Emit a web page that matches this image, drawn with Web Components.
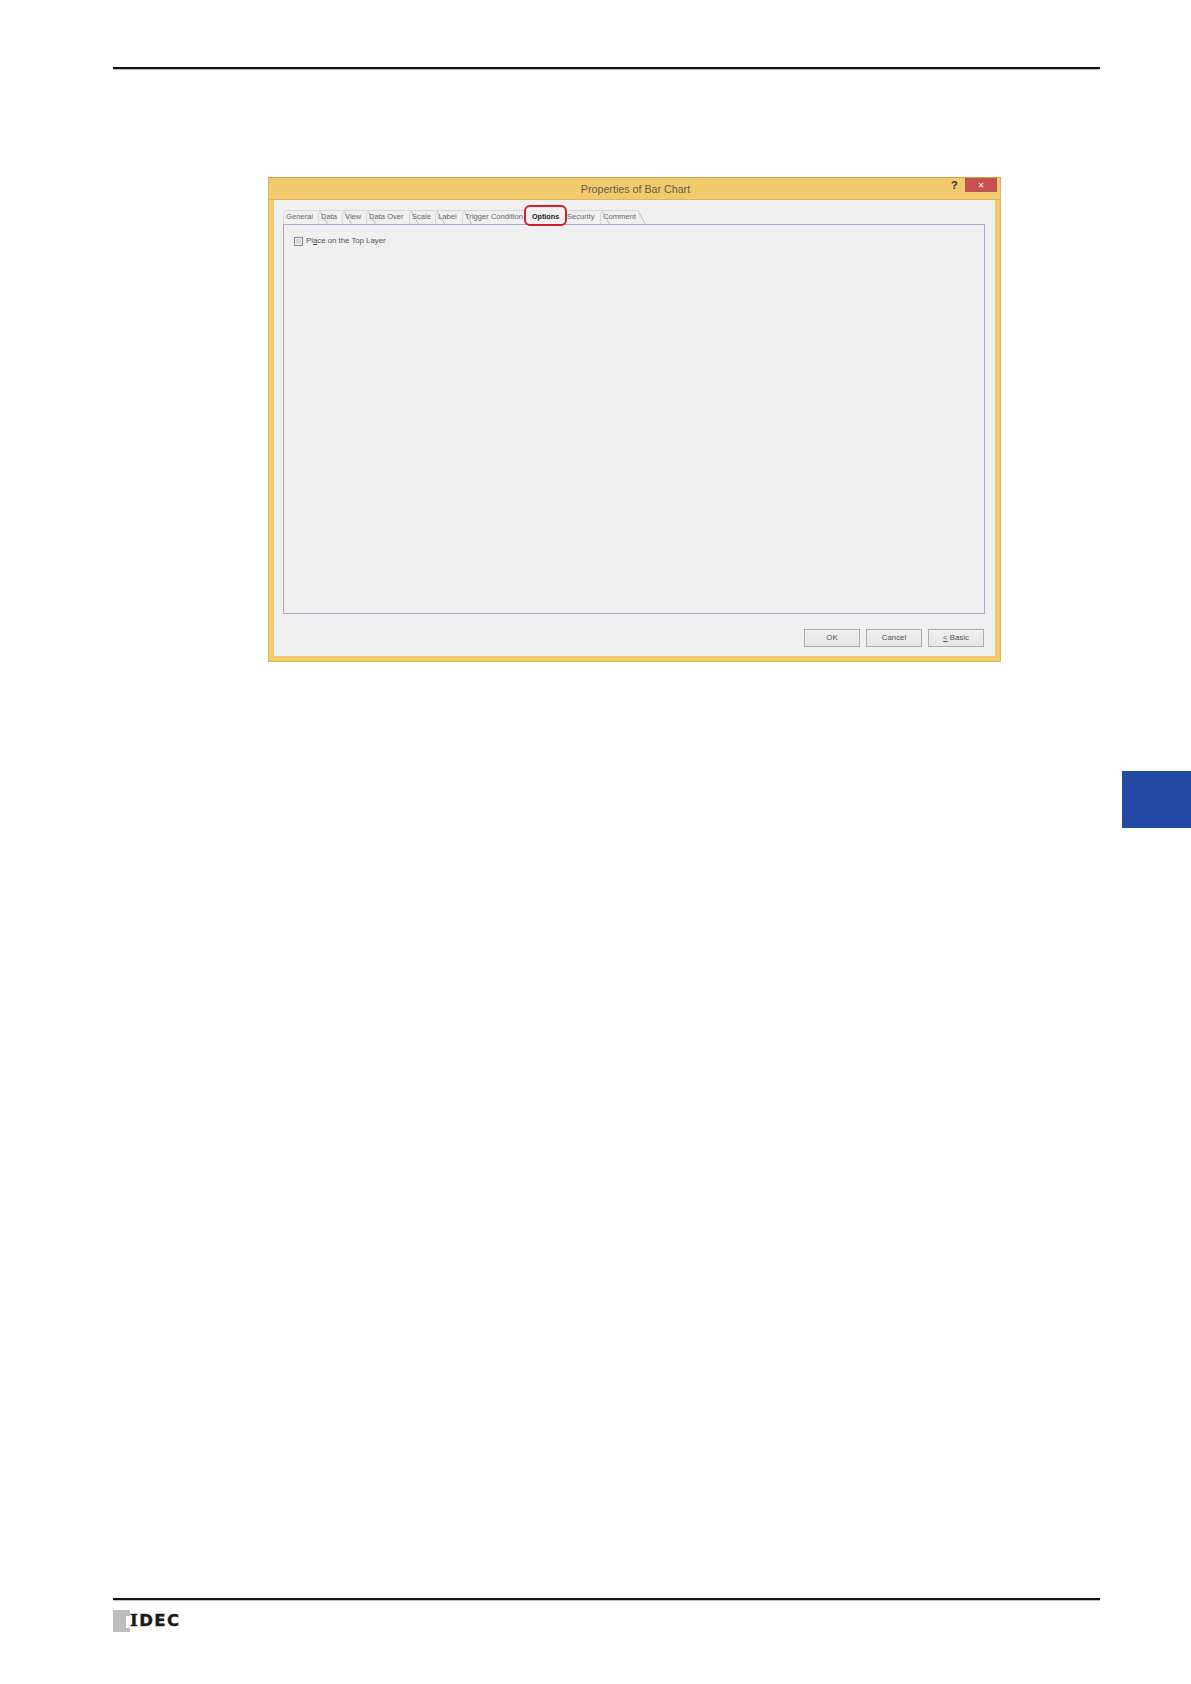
<!DOCTYPE html>
<html lang="en"><head><meta charset="utf-8"><title>Properties of Bar Chart</title>
<style>
html,body{margin:0;padding:0;background:#fff}
body{width:1191px;height:1684px;overflow:hidden;font-family:"Liberation Sans",sans-serif}
</style></head><body>
<manual-page>
  <dialog-window slot="main" heading="Properties of Bar Chart">
    <tab-item style="width:35px">General</tab-item><tab-item style="width:24px">Data</tab-item><tab-item style="width:24px">View</tab-item><tab-item style="width:43px">Data Over</tab-item><tab-item style="width:26px">Scale</tab-item><tab-item style="width:27px">Label</tab-item><tab-item clip style="width:62px">Trigger Condition</tab-item><tab-item active style="width:43px">Options</tab-item><tab-item flush style="width:33px">Security</tab-item><tab-item style="width:36px">Comment</tab-item>
    <check-box slot="panel">Pl<u>a</u>ce on the Top Layer</check-box>
    <dialog-button slot="buttons">OK</dialog-button><dialog-button slot="buttons">Cancel</dialog-button><dialog-button slot="buttons"><u>&lt;</u> Basic</dialog-button>
  </dialog-window>
  <idec-logo slot="logo"></idec-logo>
</manual-page>
<script>
function def(name,css,html){customElements.define(name,class extends HTMLElement{constructor(){super();const r=this.attachShadow({mode:"open"});r.innerHTML="<style>"+css+"</style>"+(typeof html==="function"?html(this):html)}})}
def("manual-page",`
:host{display:block;position:relative;width:1191px;height:1684px;box-sizing:border-box;padding:67px 0 0 113px}
.rule{width:987px;height:2px;background:#111;box-shadow:0 1px 1px #bbb}
.main{padding:108px 0 0 155px;height:1529px;box-sizing:border-box}
.side{position:absolute;left:1122px;top:771px;width:69px;height:57px;background:#2449a4}
`,`<div class="rule"></div><div class="main"><slot name="main"></slot></div><div class="foot"><div class="rule"></div><slot name="logo"></slot></div><div class="side"></div>`);
def("dialog-window",`
:host{display:flex;flex-direction:column;width:733px;height:485px;box-sizing:border-box;background:#f0f0f0;border:1px solid #dcb660;border-top-color:#c9a24a;color:#444}
.title{height:22px;flex:none;background:#f1ca6b;display:flex;align-items:center;position:relative;box-shadow:inset 0 -1px #dcb660}
.title h1{margin:0 0 1px;flex:1;text-align:center;font:400 10.7px/14px "Liberation Sans",sans-serif;color:#655c4c;padding-left:2px}
.help{position:absolute;left:682px;top:0;font:700 11px/15px "Liberation Sans",sans-serif;color:#333}
.close{position:absolute;left:696px;top:0;width:32px;height:14px;background:#c75050;color:#fff;font:400 8px/15px "DejaVu Sans",sans-serif;text-align:center}
.body{flex:1;display:flex;flex-direction:column;border:solid #f1ca6b;border-width:0 5px 5px;padding:9px 10px 8px 9px;min-height:0}
.tabs{display:flex;height:15px;align-items:flex-end;flex:none}
.panel{height:390px;flex:none;box-sizing:border-box;border:1px solid #a8aad0;padding:9px 10px}
.buttons{display:flex;justify-content:flex-end;gap:6px;padding:15px 1px 0 0}
`,h=>`<div class="title"><h1>${h.getAttribute("heading")}</h1><span class="help">?</span><span class="close">✕</span></div><div class="body"><div class="tabs"><slot></slot></div><div class="panel"><slot name="panel"></slot></div><div class="buttons"><slot name="buttons"></slot></div></div>`);
def("tab-item",`
:host{display:block;position:relative;height:14px;box-sizing:border-box;padding:0 0 0 2px;font:400 7.6px/11px "Liberation Sans",sans-serif;color:#666;white-space:nowrap;flex:none;border:solid #d6d6d6;border-width:1px 0 0 1px;border-radius:5px 0 0 0}
:host::after{content:"";position:absolute;right:-6px;top:-1px;height:14px;border-left:1px solid #bfbfbf;transform:skewX(30deg)}
:host([clip]){overflow:hidden}
:host([clip])::after,:host([active])::after{display:none}
:host([flush]){padding-left:0;border-left:0}
:host([active]){color:#222;font-weight:700;font-size:7.2px;border:0;padding:0 0 0 8px;z-index:2;line-height:14px}
:host([active])::before{content:"";position:absolute;left:0;right:0;top:-5px;bottom:-2px;border:2px solid #d0202e;border-radius:6px;box-sizing:border-box}
`,"<slot></slot>");
def("check-box",`
:host{display:flex;align-items:center;gap:3px;font:400 7.8px/14px "Liberation Sans",sans-serif;color:#555}
i{width:9px;height:9px;box-sizing:border-box;border:1px solid #8c8c8c;background:#d8d8d8;box-shadow:inset 0 0 0 1px #efefef;display:block}
`,`<i></i><span><slot></slot></span>`);
def("dialog-button",`
:host{display:block;width:56px;height:18px;box-sizing:border-box;border:1px solid #acacac;background:linear-gradient(#f0f0f0,#e5e5e5);text-align:center;font:400 7.8px/16px "Liberation Sans",sans-serif;color:#555}
`,"<slot></slot>");
def("idec-logo",`
:host{display:flex;margin-top:10px;height:22px;width:70px}
i{display:block;position:relative;width:17px;height:22px;background:#bdbdbd;flex:none}
i::after{content:"";position:absolute;right:0;top:6px;width:4px;height:12px;background:#fff}
b{font:700 16.5px/22px "DejaVu Sans",sans-serif;color:#1a1a1a;letter-spacing:1.4px;-webkit-text-stroke:.4px #1a1a1a}
b span{font-family:"DejaVu Serif",serif}
`,`<i></i><b><span>I</span>DEC</b>`);
</script></body></html>
